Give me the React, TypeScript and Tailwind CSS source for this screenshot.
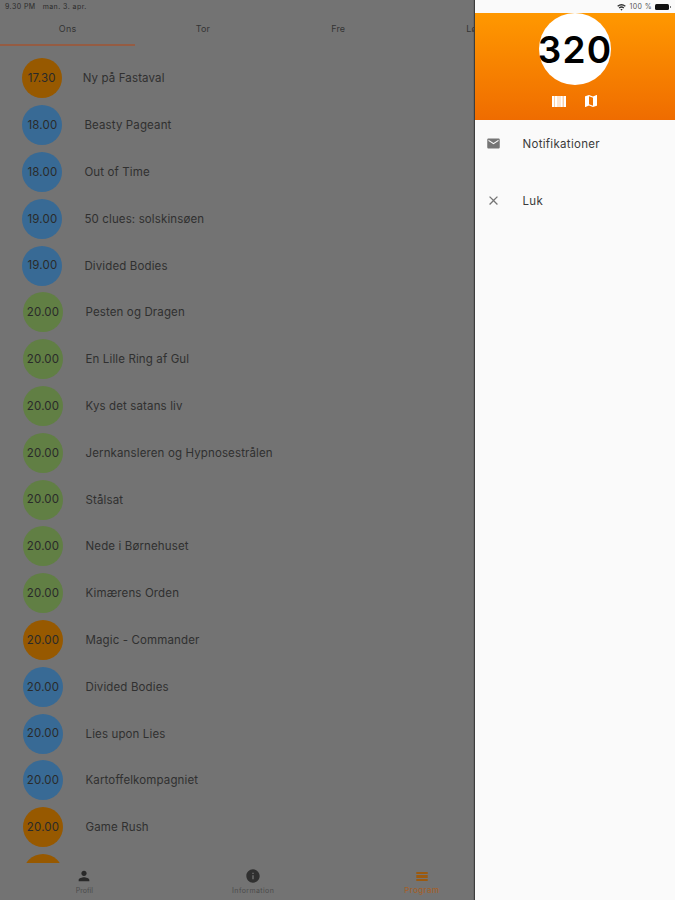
import { MdEmail, MdClose, MdPerson, MdInfo, MdMap } from "react-icons/md";

type Event = {
  time: string;
  title: string;
  color: string;
};

const orange = "bg-[#975900]";
const blue = "bg-[#386a95]";
const green = "bg-[#617f44]";

const events: Event[] = [
  { time: "17.30", title: "Ny på Fastaval", color: orange },
  { time: "18.00", title: "Beasty Pageant", color: blue },
  { time: "18.00", title: "Out of Time", color: blue },
  { time: "19.00", title: "50 clues: solskinsøen", color: blue },
  { time: "19.00", title: "Divided Bodies", color: blue },
  { time: "20.00", title: "Pesten og Dragen", color: green },
  { time: "20.00", title: "En Lille Ring af Gul", color: green },
  { time: "20.00", title: "Kys det satans liv", color: green },
  { time: "20.00", title: "Jernkansleren og Hypnosestrålen", color: green },
  { time: "20.00", title: "Stålsat", color: green },
  { time: "20.00", title: "Nede i Børnehuset", color: green },
  { time: "20.00", title: "Kimærens Orden", color: green },
  { time: "20.00", title: "Magic - Commander", color: orange },
  { time: "20.00", title: "Divided Bodies", color: blue },
  { time: "20.00", title: "Lies upon Lies", color: blue },
  { time: "20.00", title: "Kartoffelkompagniet", color: blue },
  { time: "20.00", title: "Game Rush", color: orange },
  { time: "", title: "", color: orange },
];

function rowInset(time: string) {
  if (time === "17.30") return "pl-[21.7px] gap-[21px]";
  if (time.startsWith("1")) return "pl-[22.4px] gap-[22px]";
  return "pl-[23px] gap-[22.5px]";
}

function EventRow({ event }: { event: Event }) {
  return (
    <div className={`flex h-[46.8px] shrink-0 items-center ${rowInset(event.time)}`}>
      <div
        className={`flex size-10 shrink-0 items-center justify-center rounded-full pt-px text-[11.5px] tracking-[0.15px] text-[#2a2a2a] ${event.color}`}
      >
        {event.time}
      </div>
      <span className="whitespace-nowrap pt-[1.4px] text-[11.5px] tracking-[0.13px] text-[#303030]">
        {event.title}
      </span>
    </div>
  );
}

function Program() {
  return (
    <div className="flex h-full w-[675px] flex-col bg-[#737373]">
      <div className="flex h-[14px] shrink-0 items-center gap-[7px] pl-[5px] text-[7px] tracking-[0.45px] text-[#2b2b2b]">
        <span>9.30 PM</span>
        <span>man. 3. apr.</span>
      </div>

      <div className="flex h-8 shrink-0 text-[9px] tracking-[0.2px] text-[#333]">
        {["Ons", "Tor", "Fre", "Lør"].map((day, i) => (
          <div
            key={day}
            className={`flex w-[135.3px] shrink-0 justify-center pt-2 leading-[13px] ${
              i === 0 ? "border-b-2 border-[#955c43]" : ""
            }`}
          >
            {day}
          </div>
        ))}
      </div>

      <div className="flex min-h-0 flex-1 flex-col overflow-hidden pt-[9px]">
        {events.map((event, i) => (
          <EventRow key={i} event={event} />
        ))}
      </div>

      <div className="flex h-[37px] shrink-0 text-[7px] leading-[9px] text-[#4b4b4b]">
        <div className="flex flex-1 flex-col items-center pt-[5px]">
          <MdPerson className="size-4 text-[#292929]" />
          <span className="mt-[2px]">Profil</span>
        </div>
        <div className="flex flex-1 flex-col items-center pt-[5px]">
          <MdInfo className="size-4 text-[#303030]" />
          <span className="mt-[2px] tracking-[0.4px]">Information</span>
        </div>
        <div className="flex flex-1 flex-col items-center pt-[5px] text-[#a1602a]">
          <svg viewBox="0 0 16 16" className="size-4" fill="#9b5a10">
            <path d="M2.3 4h11.4v2H2.3zM2.3 7h11.4v3H2.3zM2.3 11h11.4v2H2.3z" />
          </svg>
          <span className="mt-[2px] text-[8px] font-medium tracking-[0.35px]">Program</span>
        </div>
        <div className="flex-1" />
      </div>
    </div>
  );
}

function Barcode() {
  return (
    <svg viewBox="0 0 14 11" className="h-[11px] w-3.5" fill="#fff">
      <path d="M0 0h14v11H0z" opacity=".65" />
      <path d="M0 0h2v11H0zM3 0h2.5v11H3zM6.5 0h1v11h-1zM8.5 0h2v11h-2zM12 0h2v11h-2z" />
    </svg>
  );
}

function Drawer() {
  return (
    <aside className="absolute inset-y-0 right-0 flex w-[200px] flex-col bg-[#fafafa] shadow-[-1px_0_1px_#3d3d3d]">
      <div className="flex h-[13px] shrink-0 items-center justify-end gap-[3px] pt-px pr-1 text-[7px] text-[#555]">
        <svg viewBox="0 0 10 8" className="h-[7px] w-[9px]" fill="none" stroke="#333" strokeWidth="1.5">
          <path d="M.6 2.6Q5-1 9.4 2.6M2.3 4.5Q5 2.4 7.7 4.5" />
          <path d="M3.7 5.8h2.6L5 7.6z" fill="#333" stroke="none" />
        </svg>
        <span className="tracking-[0.4px]">100 %</span>
        <div className="flex items-center">
          <div className="h-[6px] w-[14px] rounded-[1.5px] bg-[#111]" />
          <div className="ml-px h-[2px] w-px bg-[#777]" />
        </div>
      </div>

      <div className="flex h-[106.5px] shrink-0 flex-col items-center bg-linear-to-b from-[#ff9800] to-[#ef6c00]">
        <div className="flex size-[72px] items-center justify-center rounded-full bg-white pt-px text-[37px] font-semibold tracking-[1.1px] text-black">
          320
        </div>
        <div className="mt-2 flex items-center gap-[17px]">
          <Barcode />
          <MdMap className="size-4 text-white" />
        </div>
      </div>

      <div className="flex flex-col text-[11.5px] tracking-[0.3px] text-[#3a3a3a]">
        <div className="flex h-[48px] items-center gap-[21.5px] pl-[11px]">
          <MdEmail className="size-[15px] text-[#757575]" />
          <span className="pt-[2px]">Notifikationer</span>
        </div>
        <div className="mt-[9px] flex h-12 items-center gap-[21.5px] pl-[11px]">
          <MdClose className="size-[15px] text-[#757575]" />
          <span className="pt-[2px]">Luk</span>
        </div>
      </div>
    </aside>
  );
}

export default function App() {
  return (
    <div className="relative h-[900px] w-[675px] overflow-hidden font-[Inter,'Liberation_Sans',sans-serif]">
      <Program />
      <Drawer />
    </div>
  );
}
